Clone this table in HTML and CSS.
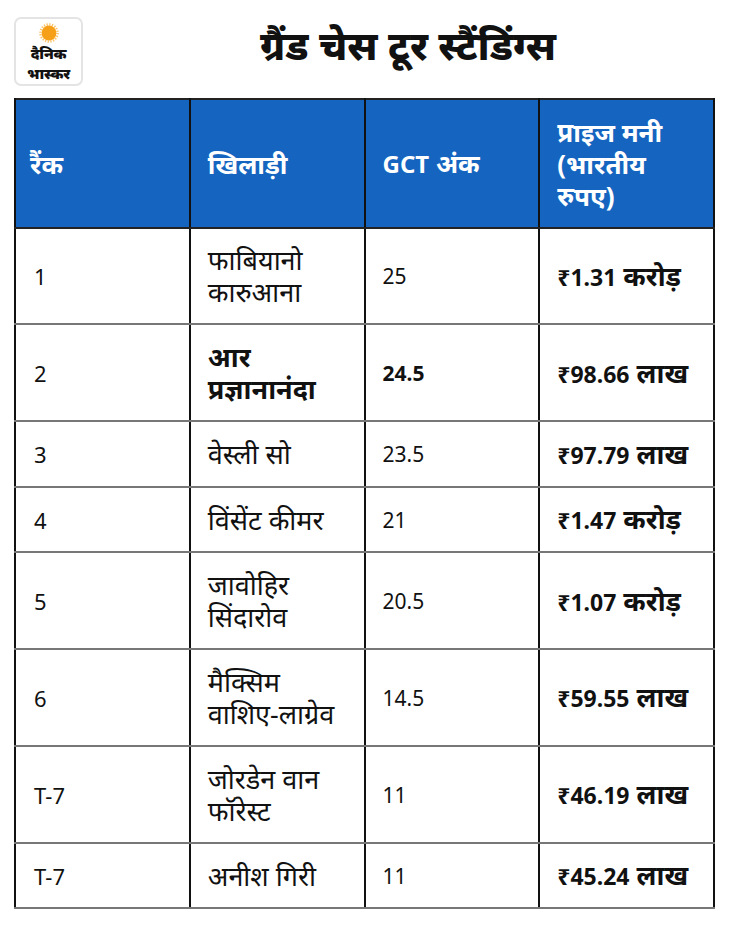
FILE: index.html
```html
<!DOCTYPE html>
<html lang="hi">
<head>
<meta charset="utf-8">
<link rel="stylesheet" href="styles.css">
</head>
<body>
<div class="page">
  <header class="top">
    <div class="logo">
      <svg class="sun" width="20" height="20" viewBox="0 0 20 20">
        <circle cx="10" cy="10" r="8.6" fill="none" stroke="#fbc36a" stroke-width="2.4" stroke-dasharray="1.3 1.4"/>
        <circle cx="10" cy="10" r="7.4" fill="#f6a019"/>
      </svg>
      <div class="logo-text"><span>दैनिक</span><span>भास्कर</span></div>
    </div>
    <h1 class="title">ग्रैंड चेस टूर स्टैंडिंग्स</h1>
  </header>
  <table class="standings">
    <thead>
      <tr><th class="rank">रैंक</th><th>खिलाड़ी</th><th><span class="lat">GCT</span> अंक</th><th>प्राइज मनी (भारतीय रुपए)</th></tr>
    </thead>
    <tbody>
      <tr><td class="rank num">1</td><td>फाबियानो कारुआना</td><td class="num">25</td><td class="money"><span class="amt">₹1.31</span> करोड़</td></tr>
      <tr class="hl"><td class="rank num">2</td><td>आर प्रज्ञानानंदा</td><td class="num">24.5</td><td class="money"><span class="amt">₹98.66</span> लाख</td></tr>
      <tr><td class="rank num">3</td><td>वेस्ली सो</td><td class="num">23.5</td><td class="money"><span class="amt">₹97.79</span> लाख</td></tr>
      <tr><td class="rank num">4</td><td>विंसेंट कीमर</td><td class="num">21</td><td class="money"><span class="amt">₹1.47</span> करोड़</td></tr>
      <tr><td class="rank num">5</td><td>जावोहिर सिंदारोव</td><td class="num">20.5</td><td class="money"><span class="amt">₹1.07</span> करोड़</td></tr>
      <tr><td class="rank num">6</td><td>मैक्सिम वाशिए-लाग्रेव</td><td class="num">14.5</td><td class="money"><span class="amt">₹59.55</span> लाख</td></tr>
      <tr><td class="rank num">T-7</td><td>जोरडेन वान फॉरेस्ट</td><td class="num">11</td><td class="money"><span class="amt">₹46.19</span> लाख</td></tr>
      <tr><td class="rank num">T-7</td><td>अनीश गिरी</td><td class="num">11</td><td class="money"><span class="amt">₹45.24</span> लाख</td></tr>
    </tbody>
  </table>
</div>
</body>
</html>
```
FILE: styles.css
```css
* { box-sizing: border-box; }
html, body { margin: 0; padding: 0; background: #fff; }
body {
  font-family: "Noto Sans", "Noto Sans Devanagari", sans-serif;
  color: #111;
}
.page { padding: 17px 15px 0 14px; }
.top {
  display: flex;
  align-items: center;
  height: 69px;
  margin-bottom: 12px;
}
.logo {
  width: 69px;
  height: 69px;
  border: 2px solid #e4e4e4;
  border-radius: 7px;
  display: flex;
  flex-direction: column;
  align-items: center;
  padding-top: 4px;
  flex: none;
}
.sun { display: block; }
.logo-text {
  display: flex;
  flex-direction: column;
  align-items: center;
  font-weight: 900;
  font-size: 15px;
  line-height: 20px;
  color: #111;
  letter-spacing: -0.2px;
}
.title {
  flex: 1;
  margin: 0;
  text-align: center;
  font-size: 40px;
  font-weight: 800;
  line-height: 48px;
  padding-left: 18px;
  padding-bottom: 14px;
  color: #111;
}
.standings {
  width: 701px;
  border-collapse: collapse;
  table-layout: fixed;
  border: 2px solid #222;
}
.standings th, .standings td {
  width: 25%;
  text-align: left;
  vertical-align: middle;
  font-size: 27px;
  line-height: 32px;
  padding: 15.7px 17px 15px 17px;
  border-left: 2px solid #111;
  border-right: 2px solid #111;
}
.standings th {
  background: #1565c0;
  color: #fff;
  font-weight: 700;
  font-size: 26px;
  border-bottom: 2px solid #222;
}
.standings th .lat { font-size: 24px; }
.standings td {
  border-bottom: 2px solid #777;
  font-weight: 400;
}
.standings td.num { font-size: 21px; }
.standings th.rank { padding-left: 14px; }
.standings td.rank { padding-left: 18px; font-size: 22px; }
.standings .money { font-weight: 700; font-size: 27px; }
.standings .amt { font-size: 23px; }
.standings tr.hl td { font-weight: 700; }
.standings tr.hl td.rank { font-weight: 400; }
```
